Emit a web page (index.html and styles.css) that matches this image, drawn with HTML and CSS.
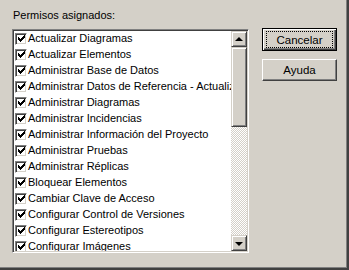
FILE: index.html
```html
<!DOCTYPE html>
<html lang="es">
<head>
  <meta charset="UTF-8" />
  <title>Permisos asignados</title>
  <link rel="stylesheet" href="styles.css">
</head>
<body>
  <svg width="0" height="0" class="defs">
    <symbol id="tick" viewBox="0 0 7 7">
      <path d="M0 2h1v3h-1zM1 3h1v3h-1zM2 4h1v3h-1zM3 3h1v3h-1zM4 2h1v3h-1zM5 1h1v3h-1zM6 0h1v3h-1z"/>
    </symbol>
  </svg>

  <div class="dialog">
    <div class="left">
      <div class="label">Permisos asignados:</div>
      <div class="listbox">
        <ul class="items">
          <li><span class="check"><svg><use href="#tick"/></svg></span><span class="text">Actualizar Diagramas</span></li>
          <li><span class="check"><svg><use href="#tick"/></svg></span><span class="text">Actualizar Elementos</span></li>
          <li><span class="check"><svg><use href="#tick"/></svg></span><span class="text">Administrar Base de Datos</span></li>
          <li><span class="check"><svg><use href="#tick"/></svg></span><span class="text">Administrar Datos de Referencia - Actualiza</span></li>
          <li><span class="check"><svg><use href="#tick"/></svg></span><span class="text">Administrar Diagramas</span></li>
          <li><span class="check"><svg><use href="#tick"/></svg></span><span class="text">Administrar Incidencias</span></li>
          <li><span class="check"><svg><use href="#tick"/></svg></span><span class="text">Administrar Información del Proyecto</span></li>
          <li><span class="check"><svg><use href="#tick"/></svg></span><span class="text">Administrar Pruebas</span></li>
          <li><span class="check"><svg><use href="#tick"/></svg></span><span class="text">Administrar Réplicas</span></li>
          <li><span class="check"><svg><use href="#tick"/></svg></span><span class="text">Bloquear Elementos</span></li>
          <li><span class="check"><svg><use href="#tick"/></svg></span><span class="text">Cambiar Clave de Acceso</span></li>
          <li><span class="check"><svg><use href="#tick"/></svg></span><span class="text">Configurar Control de Versiones</span></li>
          <li><span class="check"><svg><use href="#tick"/></svg></span><span class="text">Configurar Estereotipos</span></li>
          <li><span class="check"><svg><use href="#tick"/></svg></span><span class="text">Configurar Imágenes</span></li>
        </ul>
        <div class="scrollbar">
          <div class="sb-btn"><span class="arrow up"></span></div>
          <div class="thumb"></div>
          <div class="track"></div>
          <div class="sb-btn"><span class="arrow down"></span></div>
        </div>
      </div>
    </div>
    <div class="buttons">
      <button class="default"><span class="focus">Cancelar</span></button>
      <button>Ayuda</button>
    </div>
  </div>
</body>
</html>
```

FILE: styles.css
```css
body {
  margin: 0;
  background-color: #d4d0c8;
  font-family: 'Liberation Sans', Arial, sans-serif;
  font-size: 11px;
  color: #000;
}
.defs {
  position: absolute;
}
.dialog {
  display: flex;
  width: 349px;
  height: 270px;
  box-sizing: border-box;
  padding: 9px 0 0 12px;
  background-color: #d4d0c8;
  box-shadow: inset -1px -1px #404040, inset -2px -2px #404040, inset -3px -3px #808080;
}
.left {
  display: flex;
  flex-direction: column;
}
.label {
  height: 13px;
  line-height: 13px;
  margin: 0 0 7px 1px;
}
.listbox {
  display: flex;
  width: 237px;
  height: 224px;
  box-sizing: border-box;
  border-style: solid;
  border-width: 1px;
  border-color: #808080 #fff #fff #808080;
  box-shadow: inset 1px 1px #404040, inset -1px -1px #d4d0c8;
  padding: 1px;
  background-color: #fff;
}
.items {
  flex: 1;
  list-style: none;
  margin: 0;
  padding: 0;
  overflow: hidden;
  white-space: nowrap;
}
.items li {
  display: flex;
  align-items: center;
  height: 16px;
  padding-left: 1px;
}
.text {
  line-height: 13px;
  margin-bottom: 2px;
}
.check {
  display: flex;
  align-items: center;
  justify-content: center;
  flex-shrink: 0;
  width: 12px;
  height: 12px;
  box-sizing: border-box;
  margin: 0 1px 1px 0;
  border-style: solid;
  border-width: 1px;
  border-color: #808080 #fff #fff #808080;
  box-shadow: inset 1px 1px #404040, inset -1px -1px #d4d0c8;
  background-color: #fff;
}
.check svg {
  width: 7px;
  height: 7px;
  fill: #000;
  shape-rendering: crispEdges;
}
.scrollbar {
  display: flex;
  flex-direction: column;
  flex-shrink: 0;
  width: 16px;
}
.sb-btn, .thumb {
  box-sizing: border-box;
  background-color: #d4d0c8;
  border-style: solid;
  border-width: 1px;
  border-color: #d4d0c8 #404040 #404040 #d4d0c8;
  box-shadow: inset 1px 1px #fff, inset -1px -1px #808080;
}
.sb-btn {
  display: flex;
  align-items: center;
  justify-content: center;
  height: 16px;
}
.thumb {
  height: 80px;
}
.track {
  flex: 1;
  background-color: #fff;
  background-image: repeating-conic-gradient(#d4d0c8 0 25%, #fff 0 50%);
  background-size: 2px 2px;
}
.arrow {
  width: 0;
  height: 0;
  border-left: 4px solid transparent;
  border-right: 4px solid transparent;
}
.arrow.up {
  border-bottom: 4px solid #000;
  margin-bottom: 1px;
}
.arrow.down {
  border-top: 4px solid #000;
  margin-top: 1px;
}
.buttons {
  display: flex;
  flex-direction: column;
  gap: 8px;
  margin: 19px 0 0 13px;
}
button {
  width: 75px;
  height: 22px;
  padding: 0;
  font-family: 'Liberation Sans', Arial, sans-serif;
  font-size: 11.5px;
  color: #000;
  background-color: #d4d0c8;
  border-style: solid;
  border-width: 1px;
  border-color: #fff #404040 #404040 #fff;
  box-shadow: inset -1px -1px #808080;
}
button.default {
  height: 23px;
  border: 1px solid #000;
  box-shadow: inset 1px 1px #fff, inset -1px -1px #404040, inset -2px -2px #808080;
  display: flex;
  align-items: center;
  justify-content: center;
}
.focus {
  display: flex;
  align-items: center;
  justify-content: center;
  width: 65px;
  height: 15px;
  border: 1px dotted #000;
}
```
